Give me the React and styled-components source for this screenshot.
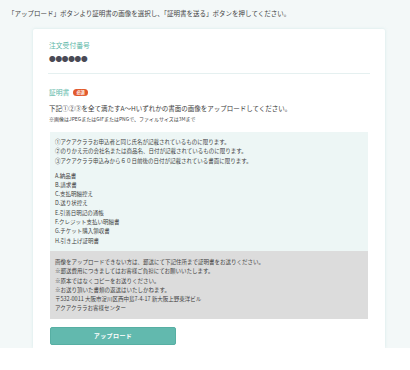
import React from "react";
import styled, { createGlobalStyle } from "styled-components";

const Global = createGlobalStyle`
  html, body { margin: 0; padding: 0; background: #ffffff; }
  body { font-family: "Noto Sans CJK JP", "Noto Sans", sans-serif; color: #3a3a3a; }
`;

const Page = styled.div`
  background: #f3f8f8;
  padding: 8px 25px 0 33px;
`;

const Lead = styled.p`
  margin: 0 0 0 -25px;
  font-size: 6.5px;
  line-height: 10px;
  color: #444;
  height: 21px;
`;

const Card = styled.div`
  background: #ffffff;
  border-radius: 2px 2px 0 0;
  box-shadow: 0 0 3px rgba(150, 205, 205, 0.35);
  padding: 11px 15px 3px 16px;
`;

const Label = styled.div`
  font-size: 6.8px;
  line-height: 10px;
  color: #5cb8a8;
  display: flex;
  align-items: center;
  gap: 4px;
`;

const Badge = styled.span`
  display: inline-block;
  background: #e2592c;
  color: #fff;
  font-size: 4.2px;
  font-weight: 700;
  line-height: 7px;
  padding: 0 3px;
  border-radius: 3.5px;
`;

const Masked = styled.div`
  margin-top: 4px;
  font-size: 6.6px;
  line-height: 9px;
  color: #4a4a55;
  letter-spacing: -0.2px;
`;

const Divider = styled.hr`
  border: none;
  height: 1px;
  background: #e5f0f0;
  margin: 10px 0 13px -1px;
`;

const Desc = styled.p`
  margin: 6px 0 0;
  font-size: 6.5px;
  line-height: 10px;
  color: #3a3a3a;
`;

const Note = styled.p`
  margin: 2px 0 0;
  font-size: 5px;
  line-height: 8px;
  color: #444;
`;

const InfoBox = styled.div`
  margin: 0 2px 0 1px;
  background: ${(p) => (p.$tone === "grey" ? "#dcdcdc" : "#edf6f5")};
  padding: ${(p) => (p.$tone === "grey" ? "7px 5px 5px" : "6px 5px 5px")};
  margin-top: ${(p) => (p.$tone === "grey" ? "0" : "9px")};
`;

const Lines = styled.div`
  font-size: 5.5px;
  line-height: 9.3px;
  color: #3f3f3f;
  & + & { margin-top: 5.7px; }
`;

const Line = styled.div``;

const Button = styled.button`
  display: block;
  margin: 8px 0 0 1px;
  width: 126px;
  height: 18px;
  background: #62b9ae;
  border: 1px solid #57afa3;
  border-radius: 2px;
  color: #fff;
  font-family: inherit;
  font-size: 6px;
  font-weight: 700;
  letter-spacing: 0.4px;
  padding: 0;
`;

const rules = [
  "①アクアクララお申込者と同じ氏名が記載されているものに限ります。",
  "②のりかえ元の会社名または商品名、日付が記載されているものに限ります。",
  "③アクアクララ申込みから６０日前後の日付が記載されている書面に限ります。",
];

const docs = [
  "A.納品書",
  "B.請求書",
  "C.支払明細控え",
  "D.送り状控え",
  "E.引落日明記の通帳",
  "F.クレジット支払い明細書",
  "G.チケット購入領収書",
  "H.引き上げ証明書",
];

const mail = [
  "画像をアップロードできない方は、郵送にて下記住所まで証明書をお送りください。",
  "※郵送費用につきましてはお客様ご負担にてお願いいたします。",
  "※原本ではなくコピーをお送りください。",
  "※お送り頂いた書類の返送はいたしかねます。",
  "〒532-0011 大阪市淀川区西中島7-4-17 新大阪上野東洋ビル",
  "アクアクララお客様センター",
];

export default function App() {
  return (
    <>
      <Global />
      <Page>
        <Lead>「アップロード」ボタンより証明書の画像を選択し、「証明書を送る」ボタンを押してください。</Lead>
        <Card>
          <Label>注文受付番号</Label>
          <Masked>●●●●●●</Masked>
          <Divider />
          <Label>
            証明書<Badge>必須</Badge>
          </Label>
          <Desc>下記①②③を全て満たすA～Hいずれかの書面の画像をアップロードしてください。</Desc>
          <Note>※画像はJPEGまたはGIFまたはPNGで、ファイルサイズは3Mまで</Note>
          <InfoBox>
            <Lines>
              {rules.map((t) => (
                <Line key={t}>{t}</Line>
              ))}
            </Lines>
            <Lines>
              {docs.map((t) => (
                <Line key={t}>{t}</Line>
              ))}
            </Lines>
          </InfoBox>
          <InfoBox $tone="grey">
            <Lines>
              {mail.map((t) => (
                <Line key={t}>{t}</Line>
              ))}
            </Lines>
          </InfoBox>
          <Button>アップロード</Button>
        </Card>
      </Page>
    </>
  );
}
